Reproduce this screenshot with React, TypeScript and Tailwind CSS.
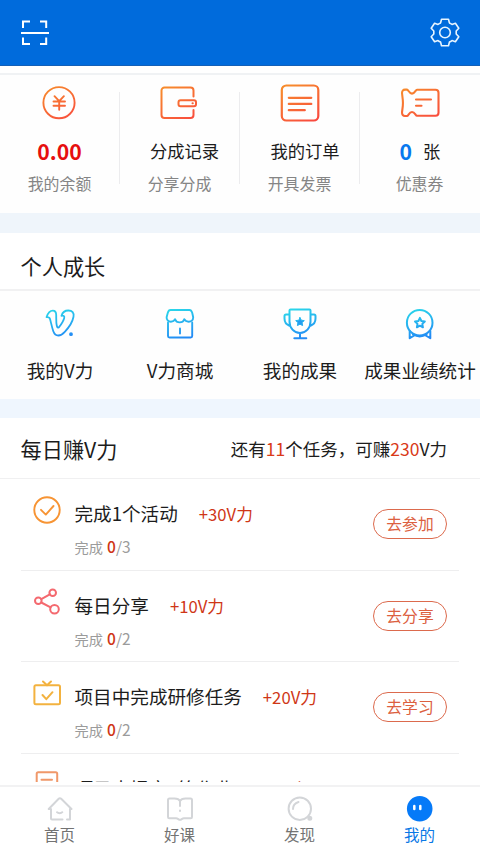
import type { ReactNode } from "react";

const WARM = "url(#warm)";
const COOL = "url(#cool)";

function Gradients() {
  return (
    <svg width="0" height="0" className="absolute">
      <defs>
        <linearGradient id="warm" gradientUnits="userSpaceOnUse" x1="10" y1="2" x2="32" y2="40">
          <stop offset="0" stopColor="#f78a2c" />
          <stop offset="1" stopColor="#f9483f" />
        </linearGradient>
        <linearGradient id="cool" gradientUnits="userSpaceOnUse" x1="16" y1="3" x2="24" y2="34">
          <stop offset="0" stopColor="#2ad6ea" />
          <stop offset="1" stopColor="#2288f5" />
        </linearGradient>
      </defs>
    </svg>
  );
}

type IconProps = { children: ReactNode; stroke: string; width?: number };

function Icon({ children, stroke, width = 1.8 }: IconProps) {
  return (
    <svg
      width="40"
      height="40"
      viewBox="0 0 40 40"
      fill="none"
      stroke={stroke}
      strokeWidth={width}
      strokeLinecap="round"
      strokeLinejoin="round"
      className="shrink-0"
    >
      {children}
    </svg>
  );
}

const yen = (
  <Icon stroke={WARM} width={1.9}>
    <circle cx="19" cy="19.700" r="15.600" />
    <path d="M14.500 13.200l4.700 5 4.700-5M13.500 18.500h11.500M13.500 22.800h11.500M19.200 18.500v8.300" />
  </Icon>
);
const wallet = (
  <Icon stroke={WARM} width={2}>
    <path d="M33.500 13.500V7.500a3 3 0 0 0-3-3h-26a3 3 0 0 0-3 3v24.500a3 3 0 0 0 3 3h26a3 3 0 0 0 3-3v-5" />
    <rect x="18.500" y="17.200" width="17.500" height="6" rx="2" />
    <path d="M32.500 20.200h.3" />
  </Icon>
);
const order = (
  <Icon stroke={WARM} width={2.2}>
    <rect x="1.800" y="2.500" width="36.500" height="35" rx="4.500" />
    <path d="M8.800 14.800h22.500M8.800 20.900h22.500M8.800 27.200h16" />
  </Icon>
);
const coupon = (
  <Icon stroke={WARM} width={2.1}>
    <path d="M5 6.600h2c1.400 0 2 4 5 4s3.500-3.800 5-3.800h18.500a3 3 0 0 1 3 3v20a3 3 0 0 1-3 3H17c-1.500 0-2-3.800-5-3.800s-3.600 4-5 4H5c-2 0-3-1.500-3-3.500l.8-6.500c.200-2 .200-4 0-6L2 10c0-2 1-3.400 3-3.400z" />
    <path d="M16 16.500h15M16 22.800h5.500" />
  </Icon>
);

const vMark = (
  <Icon stroke={COOL} width={1.8}>
    <path d="M6.500 12.200C8 7.800 10.300 5.600 12.800 5.600c2.600 0 3.400 1.400 3.400 4.400.1 3.600-.2 7.500.6 10.800.500 2.200 1.600 2.500 2.700.8 1.700-2.400 3.800-5.600 4.600-8.200.7-2.300-.200-3-2.600-2.600.9-3.200 3.400-5.300 6.800-5.300 4 0 6 2.300 5.200 6.300-1 5.400-4.600 10.700-8.700 15-2 2.200-4.200 3.700-6.500 3.700-2.500 0-4-1.500-5-4.300-1.400-4-2.200-8.200-3.200-12-.500-1.900-1.400-2.300-3.600-2z" />
    <circle cx="31" cy="29.200" r="1" fill="#2288f5" />
  </Icon>
);
const shop = (
  <Icon stroke={COOL} width={1.9}>
    <path d="M10.500 5h19c1.500 0 2.100 1 2.700 2.700l1 4.500c0 3-2.200 4.500-4.500 4.500-2.200 0-3.800-1.200-4.400-2.500-.700 2-2.500 3.200-4.600 3.200s-3.900-1.200-4.600-3.200c-.700 1.500-2.200 2.500-4.200 2.500-2.700 0-4.500-2-4.300-4.500l1.200-4.500C8.300 6 9 5 10.500 5z" />
    <path d="M8 17.500v13.500c0 .900.600 1.500 1.500 1.500h21.200c.900 0 1.500-.600 1.500-1.500V17.500M20 23.500v5" />
  </Icon>
);
const trophy = (
  <Icon stroke={COOL} width={2}>
    <path d="M10.500 4.500h19c.600 0 1 .400 1 1v11c0 6.500-4.500 11.500-10.500 11.500S9.500 23 9.500 16.500v-11c0-.600.400-1 1-1zM9.500 9.500H6c-1 0-1.500.500-1.500 1.500v2.500c0 3.500 1.700 6 5 7.200M30.500 9.500H34c1 0 1.500.500 1.500 1.500v2.500c0 3.500-1.700 6-5 7.200M20 28v4.500M14.300 33.200h12" />
    <path d="M20 12.500l1.300 2.700 3 .4-2.200 2 .5 3L20 19.200l-2.600 1.400.5-3-2.200-2 3-.4z" fill="#269cf0" strokeWidth="1" />
  </Icon>
);
const medal = (
  <Icon stroke={COOL} width={2}>
    <circle cx="19.700" cy="17.700" r="12.800" />
    <path d="M19.900 12.900l1.500 3.100 3.400.5-2.500 2.400.6 3.400-3-1.600-3 1.600.6-3.400-2.500-2.400 3.400-.5zM9.700 26v7.200l5.500-3.200M30.300 26v7.200l-5.500-3.200M13 29.500c4 2.300 9.500 2.300 13.500 0" />
  </Icon>
);

type StatProps = { icon: ReactNode; title: ReactNode; note: string; shift?: string; divider?: boolean };

function Stat({ icon, title, note, shift = "", divider = true }: StatProps) {
  return (
    <div className="relative flex w-[120px] flex-col items-center pt-[8px]">
      {icon}
      <div className={`mt-[14px] flex h-7 items-center whitespace-nowrap text-[17.300px] leading-7 text-[#1c1c1c] ${shift}`}>
        {title}
      </div>
      <div className="mt-[7px] h-6 pr-[1px] text-[15.900px] leading-6 text-[#858585]">{note}</div>
      {divider && <i className="absolute right-0 top-[17px] h-[92px] w-px bg-[#ececee]" />}
    </div>
  );
}

function Growth({ icon, label }: { icon: ReactNode; label: string }) {
  return (
    <div className="flex w-[120px] flex-col items-center pt-[14px]">
      {icon}
      <div className="mt-[11px] h-7 whitespace-nowrap text-[18.600px] leading-7 text-[#1c1c1c]">{label}</div>
    </div>
  );
}

type TaskProps = { icon: ReactNode; name: string; reward: string; total: number; action: string };

function Task({ icon, name, reward, total, action }: TaskProps) {
  return (
    <div className="mx-[21px] flex h-[91.500px] shrink-0 border-b border-[#eeeeef] pr-[12px]">
      <div className="ml-[6px] mt-[11px] h-10 w-10">{icon}</div>
      <div className="ml-[7.500px] mt-[20px] flex-1 whitespace-nowrap">
        <div className="flex h-7 items-center gap-[21px]">
          <span className="text-[18.600px] leading-7 text-[#1c1c1c]">{name}</span>
          <span className="pt-[2px] text-[16.700px] leading-7 text-[#cf3616]">{reward}</span>
        </div>
        <div className="mt-[9px] h-5 text-[14.200px] leading-5 text-[#9b9b9b]">
          完成 <span className="ml-[1px] text-[15.500px] font-medium text-[#cf3616]">0</span>
          <span className="text-[15.500px]">/{total}</span>
        </div>
      </div>
      <button className="mt-[30px] h-[30px] w-[74px] shrink-0 rounded-full border-[1.500px] border-[#dc6a4d] text-[15.800px] leading-[28px] text-[#dc6040]">
        {action}
      </button>
    </div>
  );
}

const checkCircle = (
  <Icon stroke="#f79434" width={1.900}>
    <circle cx="20" cy="20" r="12.700" />
    <path d="M14 19.800l4.800 4.800 7.700-8.600" />
  </Icon>
);
const share = (
  <Icon stroke="#f4696f" width={2}>
    <circle cx="25.700" cy="10.700" r="3.300" />
    <circle cx="11.300" cy="18.800" r="3.300" />
    <circle cx="27.500" cy="27.300" r="4.300" />
    <path d="M14.300 17.100l8.500-4.800M14.300 20.500l9.300 4.800" />
  </Icon>
);
const tv = (
  <Icon stroke="#f3b23f" width={2}>
    <rect x="7.400" y="12.300" width="25.600" height="19" rx="1.500" />
    <path d="M16 8.500l4 3.800 4-3.800M15.500 22l3.800 4.200 6.200-7" />
  </Icon>
);
const paper = (
  <Icon stroke="#f0986a" width={2}>
    <rect x="9.700" y="7.300" width="20.500" height="26" rx="1.500" />
    <path d="M14.500 14.700h10.500M14.500 21h10" />
  </Icon>
);

function Tab({ icon, label, active = false }: { icon: ReactNode; label: string; active?: boolean }) {
  return (
    <div className={`flex w-[120px] flex-col items-center pt-[7px] ${active ? "text-[#0a78e6]" : "text-[#737373]"}`}>
      <svg width="30" height="30" viewBox="0 0 30 30" fill="none" stroke="#d3d5d8" strokeWidth="2" strokeLinecap="round" strokeLinejoin="round">
        {icon}
      </svg>
      <div className="-mt-[2px] h-6 pr-px text-[15.500px] leading-6">{label}</div>
    </div>
  );
}

export default function App() {
  return (
    <div className="relative flex h-[853px] w-[480px] flex-col overflow-hidden bg-white font-['Noto_Sans_CJK_SC',sans-serif]">
      <Gradients />
      <header className="flex h-[66px] shrink-0 items-center justify-between border-b border-[#1460b8] bg-[#006bdc] px-[20px]">
        <svg width="30" height="30" viewBox="0 0 30 30" fill="none" stroke="#fff" strokeWidth="2">
          <path d="M3 10V3.500h7M20 3.500h6.200V10M3 19.500V26h7M20 26h6.200v-6.500M1 15h28" />
        </svg>
        <svg width="30" height="30" viewBox="0 0 30 30" fill="none" stroke="#e8f5ff" strokeWidth="1.600" strokeLinejoin="round">
          <circle cx="15" cy="14.500" r="5.300" />
          <path d="M11.500 1.200h7l.9 3.700c1 .400 1.800.900 2.600 1.500l3.400-1.100 3.400 5-2.600 2.700v3l2.600 2.700-3.400 5-3.400-1.100c-.800.600-1.600 1.100-2.600 1.500l-.9 3.700h-7l-.9-3.700c-1-.400-1.800-.900-2.600-1.500l-3.400 1.100-3.400-5 2.600-2.700v-3l-2.600-2.700 3.400-5 3.400 1.100c.800-.600 1.600-1.100 2.600-1.500z" />
        </svg>
      </header>

      <main className="flex h-[716px] shrink-0 flex-col overflow-hidden">
        <div className="h-[9px] shrink-0 border-b-2 border-[#f0f2f4]" />
        <section className="flex h-[138px] shrink-0 bg-[#fefefe]">
          <Stat icon={yen} title={<b className="text-[21.200px]">0.00</b>} note="我的余额" shift="pr-[1px] !text-[#e60f0f]" />
          <Stat icon={wallet} title="分成记录" note="分享分成" shift="pl-[9px]" />
          <Stat icon={order} title="我的订单" note="开具发票" shift="pl-[10px]" />
          <Stat
            icon={coupon}
            title={
              <>
                <b className="mr-[11px] text-[21.200px] text-[#0878ee]">0</b>张
              </>
            }
            note="优惠券"
            divider={false}
          />
        </section>

        <div className="h-[20px] shrink-0 bg-[#eff5fb]" />
        <h2 className="h-[58px] shrink-0 border-b-2 border-[#f1f1f2] pl-[20.500px] pt-[16px] text-[21.200px] leading-[34px] text-[#1c1c1c]">
          个人成长
        </h2>
        <section className="flex h-[108px] shrink-0 bg-[#fefefe]">
          <Growth icon={vMark} label="我的V力" />
          <Growth icon={shop} label="V力商城" />
          <Growth icon={trophy} label="我的成果" />
          <Growth icon={medal} label="成果业绩统计" />
        </section>

        <div className="h-[19px] shrink-0 bg-[#eff6fe]" />
        <div className="flex h-[61px] shrink-0 items-center justify-between border-b-[1.500px] border-[#f0f0f1] pl-[20.500px] pr-[33px] pt-[2px] text-[#1c1c1c]">
          <h2 className="text-[21.200px]">每日赚V力</h2>
          <p className="text-[17.500px]">
            还有<span className="text-[#d93a18]">11</span>个任务，可赚<span className="text-[#d93a18]">230</span>V力
          </p>
        </div>
        <Task icon={checkCircle} name="完成1个活动" reward="+30V力" total={3} action="去参加" />
        <Task icon={share} name="每日分享" reward="+10V力" total={2} action="去分享" />
        <Task icon={tv} name="项目中完成研修任务" reward="+20V力" total={2} action="去学习" />
        <Task icon={paper} name="项目中提交1篇作业" reward="+20V力" total={2} action="去学习" />
      </main>

      <nav className="mt-[3px] flex h-[68px] shrink-0 border-t-2 border-[#f2f2f3] bg-white">
        <Tab
          label="首页"
          icon={
            <path d="M22 25.500h3V15h1.500L16.200 4.800c-.800-.800-1.700-.800-2.500 0L3.700 15H6v9.500c0 .600.400 1 1 1h10.500M12 18.200c1.300 1.500 4 1.500 5.300 0" />
          }
        />
        <Tab
          label="好课"
          icon={
            <path d="M15 7C14 5 12 4.500 9.500 4.500H4.500C3.500 4.500 3 5 3 6v17c0 .800.500 1.300 1.300 1.300H11c2 0 2.500 1.500 4 1.500s2-1.500 4-1.500h6.700c.800 0 1.300-.500 1.300-1.300V6c0-1-.500-1.500-1.500-1.500h-5C18 4.500 16 5 15 7zM15 7.500V12M15 16.500v.500" />
          }
        />
        <Tab
          label="发现"
          icon={
            <>
              <circle cx="14.800" cy="14.700" r="11.200" />
              <path d="M8 15c0-3.500 2-6 5.500-7" />
              <circle cx="24.800" cy="24.300" r="1.500" fill="#d3d5d8" />
            </>
          }
        />
        <Tab
          active
          label="我的"
          icon={
            <>
              <circle cx="14.700" cy="14.800" r="12.800" fill="#067af8" stroke="none" />
              <path d="M9.300 12v3M15.300 12v3" stroke="#fff" strokeWidth="2.500" />
            </>
          }
        />
      </nav>
    </div>
  );
}
